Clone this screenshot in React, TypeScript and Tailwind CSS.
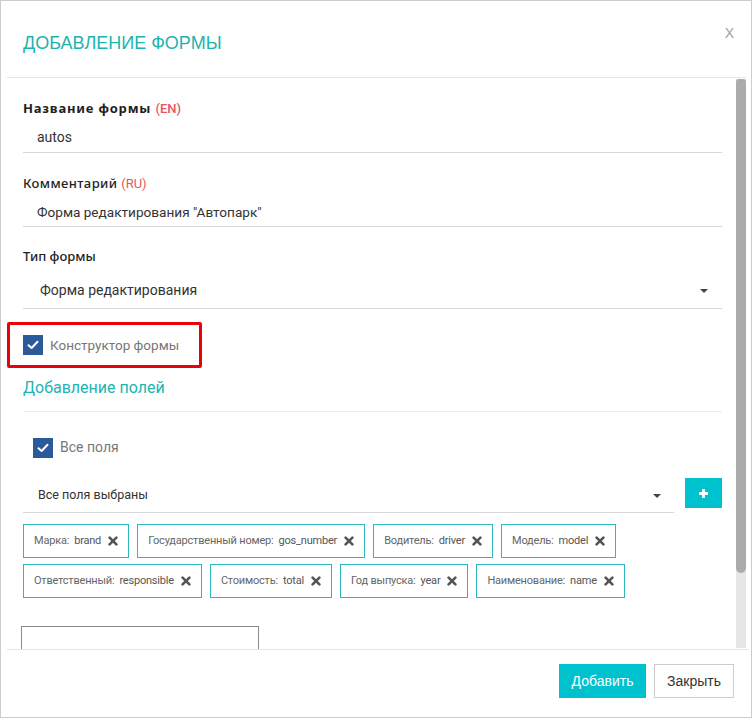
type Field = { label: string; value: string };

const fields: Field[] = [
  { label: 'Марка:', value: 'brand' },
  { label: 'Государственный номер:', value: 'gos_number' },
  { label: 'Водитель:', value: 'driver' },
  { label: 'Модель:', value: 'model' },
  { label: 'Ответственный:', value: 'responsible' },
  { label: 'Стоимость:', value: 'total' },
  { label: 'Год выпуска:', value: 'year' },
  { label: 'Наименование:', value: 'name' },
];

function Checkbox() {
  return (
    <span className="flex h-[20px] w-[20px] shrink-0 items-center justify-center bg-[#2a5a9a]">
      <svg width="12" height="10" viewBox="0 0 12 10" fill="none">
        <polyline points="1.5,5.2 4.6,8 10.5,1.8" stroke="white" strokeWidth="2" strokeLinecap="round" strokeLinejoin="round" />
      </svg>
    </span>
  );
}

function Caret() {
  return <span className="h-0 w-0 border-x-[4px] border-t-[4px] border-x-transparent border-t-[#444]" />;
}

function RemoveIcon() {
  return (
    <svg width="10" height="10" viewBox="0 0 10 10" className="ml-[7px] shrink-0">
      <path d="M1.6 1.6 L8.4 8.4 M8.4 1.6 L1.6 8.4" stroke="#555" strokeWidth="2.6" strokeLinecap="round" />
    </svg>
  );
}

function PlusIcon() {
  return (
    <svg width="11" height="11" viewBox="0 0 11 11">
      <path d="M5.5 1 V10 M1 5.5 H10" stroke="white" strokeWidth="2.8" />
    </svg>
  );
}

export default function App() {
  return (
    <div className="flex h-[718px] w-[752px] flex-col border border-[#cccccc] bg-white font-['Roboto',sans-serif] text-[#333]">
      {/* Header */}
      <div className="ml-[6px] mr-[5px] flex h-[77px] shrink-0 items-start justify-between border-b border-[#e3e6e6] pl-[16px] pr-[12px]">
        <h1 className="pt-[31px] font-['Liberation_Sans',Arial,sans-serif] text-[18px] leading-[22px] text-[#1fb3b0]">
          ДОБАВЛЕНИЕ ФОРМЫ
        </h1>
        <span className="pt-[23px] font-['Liberation_Sans',Arial,sans-serif] text-[14px] font-light leading-[18px] text-[#a0a0a0]">
          X
        </span>
      </div>

      {/* Body */}
      <div className="ml-[6px] mr-[2px] flex min-h-0 flex-1">
        <div className="min-w-0 flex-1 overflow-hidden pl-[16px] pr-[14px] pt-[20px]">
          <div className="h-[18px] font-['Noto_Sans',sans-serif] text-[13px] font-bold leading-[20px] tracking-[0.8px] text-[#1e1e1e]">
            Название формы{' '}
            <span className="font-['Roboto',sans-serif] font-medium tracking-normal text-[#e8555f]">(EN)</span>
          </div>
          <div className="mt-[4px] flex h-[33px] items-center border-b border-[#d6d6d6] pl-[14px] pt-[3px] text-[14px]">
            autos
          </div>

          <div className="mt-[20px] h-[18px] font-['Noto_Sans',sans-serif] text-[13px] font-medium leading-[20px] tracking-[0.4px] text-[#222]">
            Комментарий{' '}
            <span className="font-['Roboto',sans-serif] font-normal tracking-normal text-[#e8555f]">(RU)</span>
          </div>
          <div className="mt-[4px] flex h-[32px] items-center border-b border-[#d6d6d6] pl-[14px] pt-[3px] text-[13.6px]">
            Форма редактирования "Автопарк"
          </div>

          <div className="mt-[19px] h-[18px] font-['Noto_Sans',sans-serif] text-[13px] font-medium leading-[20px] text-[#222]">
            Тип формы
          </div>
          <div className="mt-[6px] flex h-[39px] items-center justify-between border-b border-[#d6d6d6] pl-[17px] pr-[14px] pt-[3px] text-[14px]">
            <span>Форма редактирования</span>
            <Caret />
          </div>

          <div className="-ml-[16px] mt-[13px] flex h-[46px] w-[195px] items-center gap-[7px] rounded-[2px] border-[3px] border-[#e8000b] pl-[13px]">
            <Checkbox />
            <span className="text-[13.5px] text-[#777]">Конструктор формы</span>
          </div>

          <div className="mt-[8px] text-[16px] leading-[24px] text-[#22b3b3]">Добавление полей</div>
          <div className="mt-[11px] h-px bg-[#ececec]" />

          <div className="mt-[25px] flex items-center gap-[7px] pl-[10px]">
            <Checkbox />
            <span className="text-[14px] text-[#777]">Все поля</span>
          </div>

          <div className="mt-[19px] flex items-start gap-[11px]">
            <div className="flex h-[36px] flex-1 items-center justify-between border-b border-[#d6d6d6] pl-[15px] pr-[13px] pt-[2px] text-[12.5px]">
              <span>Все поля выбраны</span>
              <Caret />
            </div>
            <button className="mt-[1px] flex h-[30px] w-[37px] items-center justify-center bg-[#00c2cf]">
              <PlusIcon />
            </button>
          </div>

          <div className="mt-[11px] flex flex-wrap gap-x-[8px] gap-y-[6px]">
            {fields.map((f) => (
              <div
                key={f.value}
                className="flex h-[34px] items-center border border-[#2cb8c2] pl-[10px] pr-[10px] text-[11px] tracking-[-0.2px] text-[#666]"
              >
                <span>{f.label}</span>
                <span className="ml-[5px] text-[#555]">{f.value}</span>
                <RemoveIcon />
              </div>
            ))}
          </div>

          <div className="-ml-[2px] mt-[28px] h-[30px] w-[238px] border border-[#8a8a8a]" />
        </div>

        {/* Scrollbar */}
        <div className="my-px w-[10px] shrink-0 bg-[#e6e6e6]">
          <div className="h-[494px] rounded-[5px] rounded-t-[3px] bg-[#ababab]" />
        </div>
        <div className="w-[3px]" />
      </div>

      {/* Footer */}
      <div className="ml-[6px] mr-[2px] flex h-[68px] shrink-0 items-start justify-end gap-[8px] border-t border-[#e1e6e6] pr-[15px] pt-[14px] font-['Liberation_Sans',Arial,sans-serif] text-[14px]">
        <button className="h-[34px] w-[87px] bg-[#00c2cf] text-white">Добавить</button>
        <button className="h-[34px] w-[80px] border border-[#cccccc] bg-white text-[#333]">Закрыть</button>
      </div>
    </div>
  );
}
